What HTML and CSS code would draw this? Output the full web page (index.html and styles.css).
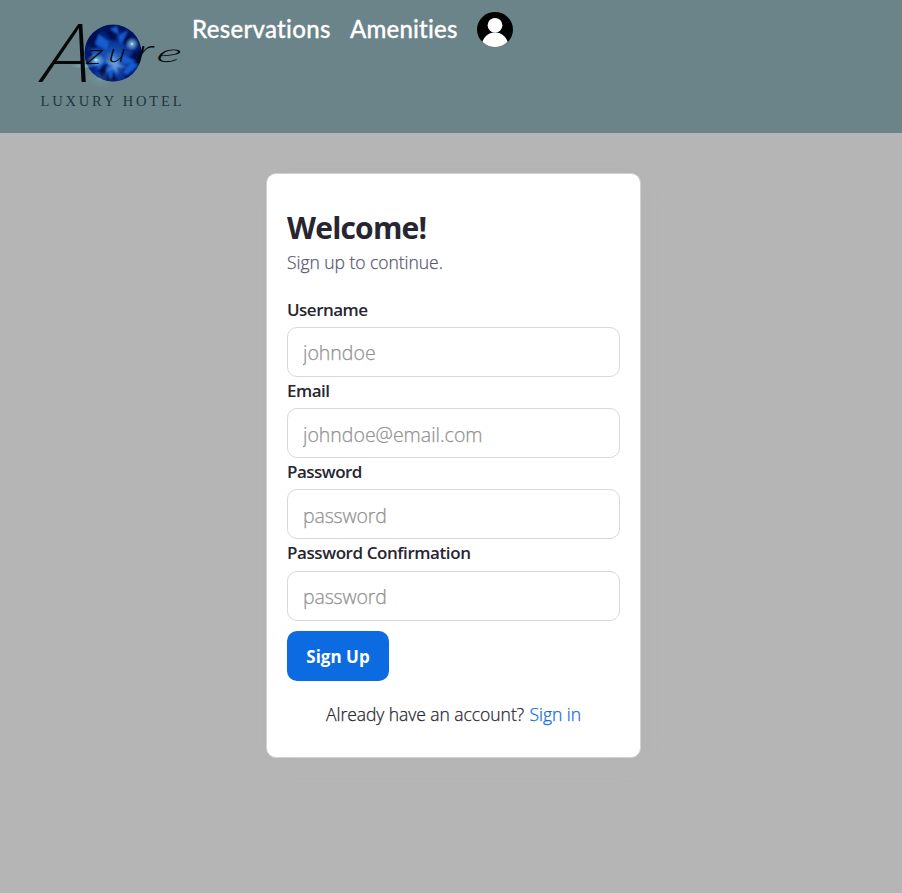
FILE: index.html
```html
<!DOCTYPE html>
<html lang="en">
<head>
<meta charset="utf-8">
<title>Azure Luxury Hotel</title>
<link rel="stylesheet" href="styles.css">
</head>
<body>
<header class="header">
  <a class="logo"><svg width="162" height="113" viewBox="30 10 162 113">
    <defs>
      <radialGradient id="gem" cx="50%" cy="62%" r="58%">
        <stop offset="0" stop-color="#548ad2"/><stop offset=".3" stop-color="#174cac"/><stop offset=".65" stop-color="#062b8d"/><stop offset="1" stop-color="#03145c"/>
      </radialGradient>
      <radialGradient id="glow"><stop offset="0" stop-color="#e4ffff"/><stop offset=".25" stop-color="#83cde8" stop-opacity=".75"/><stop offset="1" stop-color="#9bd0dd" stop-opacity="0"/></radialGradient>
      <filter id="soft"><feGaussianBlur stdDeviation=".9"/></filter>
      <filter id="edge"><feGaussianBlur stdDeviation=".5"/></filter>
      <clipPath id="round"><circle cx="113" cy="53" r="28.500"/></clipPath>
    </defs>
    <circle cx="113" cy="53" r="28.500" fill="url(#gem)" filter="url(#edge)"/>
    <g clip-path="url(#round)"><g filter="url(#soft)">
      <path fill="#020f50" d="M86 42l12-12 4 11-9 8zM103 25l10 5 6-5-3 16-7-2zM124 28l8 9-7 8-6-5zM87 52l13 2-9 8zM134 52l8-2-2 16-11-8zM96 65l12-1-5 17zM111 67l6 14-13 1zM122 66l11 6-7 8z"/>
      <path fill="#155dd0" d="M99 34l10 8-2 8-12-6zM118 36l10-6-7 15zM91 49l14 3-12 4zM119 54l17 7-12 3zM106 67l5 13 4-15zM94 62l13-3-8 11zM123 72l8-10 7 3-11 10zM110 29l7-3 2 9z"/>
      <path fill="#7eafe5" opacity=".7" d="M113 66l-8-6 6 2 1-8 3 7 8-3-6 5 9 5-9-1 1 8-5-7-8 4z"/>
    </g></g>
    <circle cx="132" cy="44" r="7" fill="url(#glow)"/>
    <ellipse cx="96" cy="60" rx="9" ry="7" fill="url(#glow)"/>
    <ellipse cx="84" cy="66" rx="13" ry="2.500" fill="url(#glow)" opacity=".6"/>
    <ellipse cx="100" cy="79" rx="15" ry="8" fill="url(#glow)" opacity=".2"/>
    <g class="script">
      <text transform="translate(40 82) skewX(-11)" font-size="82">A</text>
      <text transform="translate(86 64) skewX(-8) scale(1.350 1)" font-size="28">z</text>
      <text transform="translate(108 62) skewX(-8) scale(1.250 1)" font-size="26">u</text>
      <text transform="translate(135 63) skewX(-8) scale(1.500 1)" font-size="34">r</text>
      <text transform="translate(155 62) skewX(-16) scale(2.100 1)" font-size="25">e</text>
    </g>
    <text class="tagline" x="40.500" y="106" textLength="141">LUXURY HOTEL</text>
  </svg></a>
  <nav class="nav">
    <a>Reservations</a>
    <a class="amenities">Amenities</a>
    <svg class="avatar" width="36" height="35" viewBox="0 0 36 35"><clipPath id="av"><ellipse cx="18" cy="17.500" rx="18" ry="17.500"/></clipPath><ellipse cx="18" cy="17.500" rx="18" ry="17.500"/><g clip-path="url(#av)" fill="#fff"><circle cx="18" cy="13.300" r="7.400"/><path d="M4 36C5 25 11 20.500 18 20.500S31 25 32 36z"/></g></svg>
  </nav>
</header>
<main class="card">
  <h1>Welcome!</h1>
  <p class="subtitle">Sign up to continue.</p>
  <form>
    <label for="user">Username</label>
    <input id="user" type="text" placeholder="johndoe">
    <label for="email">Email</label>
    <input id="email" class="lower" type="email" placeholder="johndoe@email.com">
    <label for="pass">Password</label>
    <input id="pass" class="lower" type="password" placeholder="password">
    <label class="last" for="confirm">Password Confirmation</label>
    <input id="confirm" type="password" placeholder="password">
    <button type="button">Sign Up</button>
  </form>
  <p class="signin">Already have an account? <a>Sign in</a></p>
</main>
</body>
</html>
```
FILE: styles.css
```css
* { box-sizing: border-box; }
body { margin: 0; min-height: 893px; background: #b5b5b5; font-family: "Open Sans", "Noto Sans", sans-serif; color: #272630; }
.header { height: 133px; background: #6b8489; display: flex; align-items: flex-start; padding: 10px 0 0 30px; }
.logo { display: block; height: 113px; }
.logo svg { display: block; overflow: visible; }
.script { font-family: Lato, sans-serif; font-style: italic; font-weight: 300; fill: #050708; }
.tagline { font-family: "Liberation Serif", serif; font-size: 14.500px; fill: #20343b; }
.nav { display: flex; gap: 20px; align-items: flex-start; color: #fff; font: 500 24px/34px Lato, sans-serif; -webkit-text-stroke: .3px #fff; white-space: nowrap; padding-top: 2px; }
.nav a { width: 138px; letter-spacing: .3px; }
.nav .amenities { width: 107px; letter-spacing: .2px; }
.avatar { display: block; }
.card { width: 375px; height: 585px; margin: 40px 0 0 266px; padding: 30px 20px; background: #fff; border: 1px solid #d0d0d7; border-radius: 10px; box-shadow: 0 8px 24px rgba(180,180,183,.06); white-space: nowrap; }
h1 { margin: 0; font-size: 30px; line-height: 47px; height: 46px; font-weight: 700; letter-spacing: -.8px; }
.subtitle { margin: 0; font-size: 17.500px; line-height: 24px; height: 26px; font-weight: 300; letter-spacing: -.04px; color: #595873; -webkit-text-stroke: .25px #595873; }
form { margin-top: 20px; display: flex; flex-direction: column; }
label { font-size: 17px; line-height: 27px; height: 31px; font-weight: 600; letter-spacing: -.52px; }
.last { height: 32px; letter-spacing: -.42px; }
input { width: 333px; height: 50px; border: 1px solid #d7d7e0; border-radius: 10px; padding: 0 15px; font: 300 19.500px "Open Sans", sans-serif; background: #fff; }
.lower { padding-top: 2px; }
input::placeholder { color: #929292; opacity: 1; -webkit-text-stroke: .25px #929292; }
input[type="password"]::placeholder { letter-spacing: -.15px; }
button { margin-top: 10px; width: 102px; height: 50px; border: 0; border-radius: 10px; background: #0c6be0; color: #fff; font: 700 17px "Open Sans", sans-serif; padding: 1px 0 0; }
.signin { margin: 20px 0 0; text-align: center; font-size: 17.500px; line-height: 27px; font-weight: 300; letter-spacing: -.05px; -webkit-text-stroke: .25px currentColor; }
.signin a { color: #0c6be0; margin-left: 1px; }
```
